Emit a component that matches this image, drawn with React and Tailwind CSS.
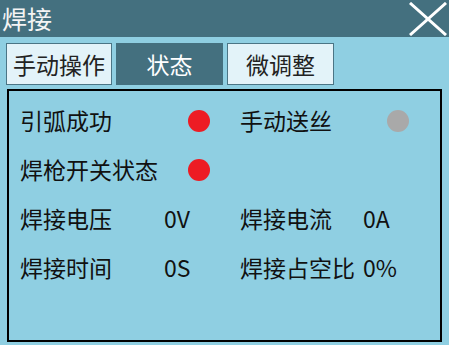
const font = { fontFamily: '"Noto Sans CJK SC", "Microsoft YaHei", sans-serif' }

function Dot({ on }) {
  return (
    <span
      className={`block w-[22px] h-[22px] rounded-full ml-[24px] ${on ? 'bg-[#ed1c24]' : 'bg-[#a9a9a9]'}`}
    />
  )
}

export default function App() {
  return (
    <div className="w-[449px] h-[345px] bg-[#8fcfe2] flex flex-col overflow-hidden" style={font}>
      <div className="h-[37px] bg-[#44707f] flex items-center justify-between pl-[2px] pr-[2px]">
        <span className="text-[#f4f4f4] text-[25px] leading-none">焊接</span>
        <svg width="40" height="34" viewBox="0 0 40 34" className="mr-[-1px]">
          <path d="M2 1 L38 33 M38 1 L2 33" stroke="#ffffff" strokeWidth="3" fill="none" />
        </svg>
      </div>

      <div className="flex gap-[4px] pl-[6px] pt-[6px]">
        <div className="w-[106px] h-[42px] bg-[#e3f3f9] border border-[#4b7585] flex items-center justify-center text-[23px] text-[#222]">
          手动操作
        </div>
        <div className="w-[107px] h-[42px] bg-[#44707f] flex items-center justify-center text-[23px] text-white">
          状态
        </div>
        <div className="w-[107px] h-[42px] bg-[#e3f3f9] border border-[#4b7585] flex items-center justify-center text-[23px] text-[#222]">
          微调整
        </div>
      </div>

      <div className="mx-[7px] mt-[4px] mb-[3px] flex-1 border-2 border-black pl-[11px] pt-[5px]">
        <div className="grid grid-cols-[144px_76px_123px_auto] text-[23px] text-[#111] leading-[49px]">
          <span>引弧成功</span>
          <div className="flex items-center"><Dot on /></div>
          <span>手动送丝</span>
          <div className="flex items-center"><Dot /></div>

          <span className="whitespace-nowrap">焊枪开关状态</span>
          <div className="flex items-center"><Dot on /></div>
          <span></span>
          <span></span>

          <span>焊接电压</span>
          <span>0V</span>
          <span>焊接电流</span>
          <span>0A</span>

          <span>焊接时间</span>
          <span>0S</span>
          <span className="whitespace-nowrap">焊接占空比</span>
          <span>0%</span>
        </div>
      </div>
    </div>
  )
}
